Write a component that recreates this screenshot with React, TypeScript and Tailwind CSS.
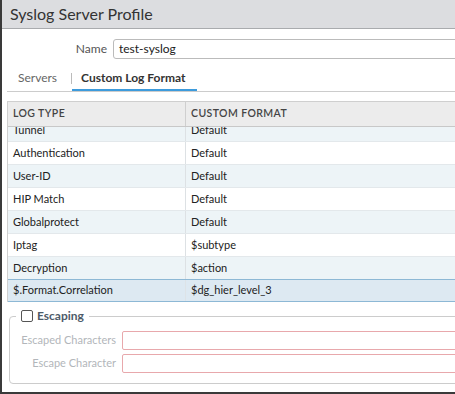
import React from "react";

const rows = [
  { type: "Tunnel", format: "Default" },
  { type: "Authentication", format: "Default" },
  { type: "User-ID", format: "Default" },
  { type: "HIP Match", format: "Default" },
  { type: "Globalprotect", format: "Default" },
  { type: "Iptag", format: "$subtype" },
  { type: "Decryption", format: "$action" },
  { type: "$.Format.Correlation", format: "$dg_hier_level_3", selected: true },
];

export default function App() {
  return (
    <div className="w-[455px] h-[394px] overflow-hidden flex bg-white text-[12px] text-[#222] font-['Lato','Open_Sans',sans-serif]">
      <div className="w-[2px] shrink-0 bg-[#3a3a3a]" />
      <div className="flex-1 min-w-0 flex flex-col">
        {/* Title */}
        <div className="h-[29px] shrink-0 bg-[#dcdde0] border-b border-[#a9abae] flex items-center pl-[8px]">
          <h1 className="text-[16px] text-[#333] leading-none">Syslog Server Profile</h1>
        </div>

        <div className="flex-1 min-h-0 pl-[5px] flex flex-col">
          {/* Name */}
          <div className="mt-[10px] flex items-center">
            <label className="w-[106px] shrink-0 pr-[6px] text-right text-[#555]">Name</label>
            <div className="w-[400px] shrink-0 h-[20px] border border-[#bbb] rounded-[3px] flex items-center px-[5px]">
              test-syslog
            </div>
          </div>

          {/* Tabs */}
          <div className="mt-[8px] flex items-center border-b border-[#ccc] w-[460px]">
            <div className="h-[24px] border-b-2 border-transparent flex items-center pl-[11px] pr-[14px] text-[#666]">
              Servers
            </div>
            <div className="w-px h-[11px] bg-[#bbb] self-center -mt-[2px]" />
            <div className="h-[24px] border-b-2 border-[#3d9bdc] flex items-center pl-[9px] pr-[12px] font-bold text-[#333]">
              Custom Log Format
            </div>
          </div>

          {/* Table */}
          <div className="mt-[9px] w-[460px] border-t border-l border-[#cfcfcf] text-[11px]">
            <div className="h-[25px] flex bg-[#ececec] border-b border-[#c8c8c8] text-[10.5px] font-semibold tracking-[0.4px] text-[#444] uppercase">
              <div className="w-[178px] shrink-0 border-r border-[#cfcfcf] flex items-center pl-[5px]">Log Type</div>
              <div className="flex-1 flex items-center pl-[5px]">Custom Format</div>
            </div>
            <div className="overflow-hidden">
              <div className="-mt-[8px]">
                {rows.map((r, i) =>
                  r.selected ? (
                    <div
                      key={r.type}
                      className="h-[23px] flex bg-[#dde9f2] border-y border-[#8db8d5] -mt-px"
                    >
                      <div className="w-[178px] shrink-0 border-r border-[#dde3e7] flex items-center pl-[5px]">{r.type}</div>
                      <div className="flex-1 flex items-center pl-[5px]">{r.format}</div>
                    </div>
                  ) : (
                    <div
                      key={r.type}
                      className={
                        "h-[23px] flex border-b border-[#e3e8eb] " +
                        (i % 2 === 0 ? "bg-[#edf4f7]" : "bg-white")
                      }
                    >
                      <div className="w-[178px] shrink-0 border-r border-[#dde1e4] flex items-center pl-[5px]">{r.type}</div>
                      <div className="flex-1 flex items-center pl-[5px]">{r.format}</div>
                    </div>
                  )
                )}
              </div>
            </div>
          </div>

          {/* Escaping */}
          <fieldset className="mt-[5px] ml-[2px] w-[460px] border border-[#cccccc] rounded-[4px] pb-[10px]">
            <legend className="ml-[6px] px-[5px] flex items-center gap-[4px]">
              <span className="w-[12px] h-[12px] border border-[#555] rounded-[2px] bg-white" />
              <span className="font-bold text-[#4d5b69]">Escaping</span>
            </legend>
            <div className="mt-[6px] flex flex-col gap-[4px] text-[11px]">
              <div className="flex items-center">
                <label className="w-[106px] shrink-0 text-right text-[#b2b6ba]">Escaped Characters</label>
                <div className="ml-[6px] w-[400px] shrink-0 h-[19px] border border-[#e8a8ac] rounded-[2px]" />
              </div>
              <div className="flex items-center">
                <label className="w-[106px] shrink-0 text-right text-[#b2b6ba]">Escape Character</label>
                <div className="ml-[6px] w-[400px] shrink-0 h-[19px] border border-[#e8a8ac] rounded-[2px]" />
              </div>
            </div>
          </fieldset>
        </div>
        <div className="h-[2px] shrink-0 bg-[#3a3a3a]" />
      </div>
    </div>
  );
}
